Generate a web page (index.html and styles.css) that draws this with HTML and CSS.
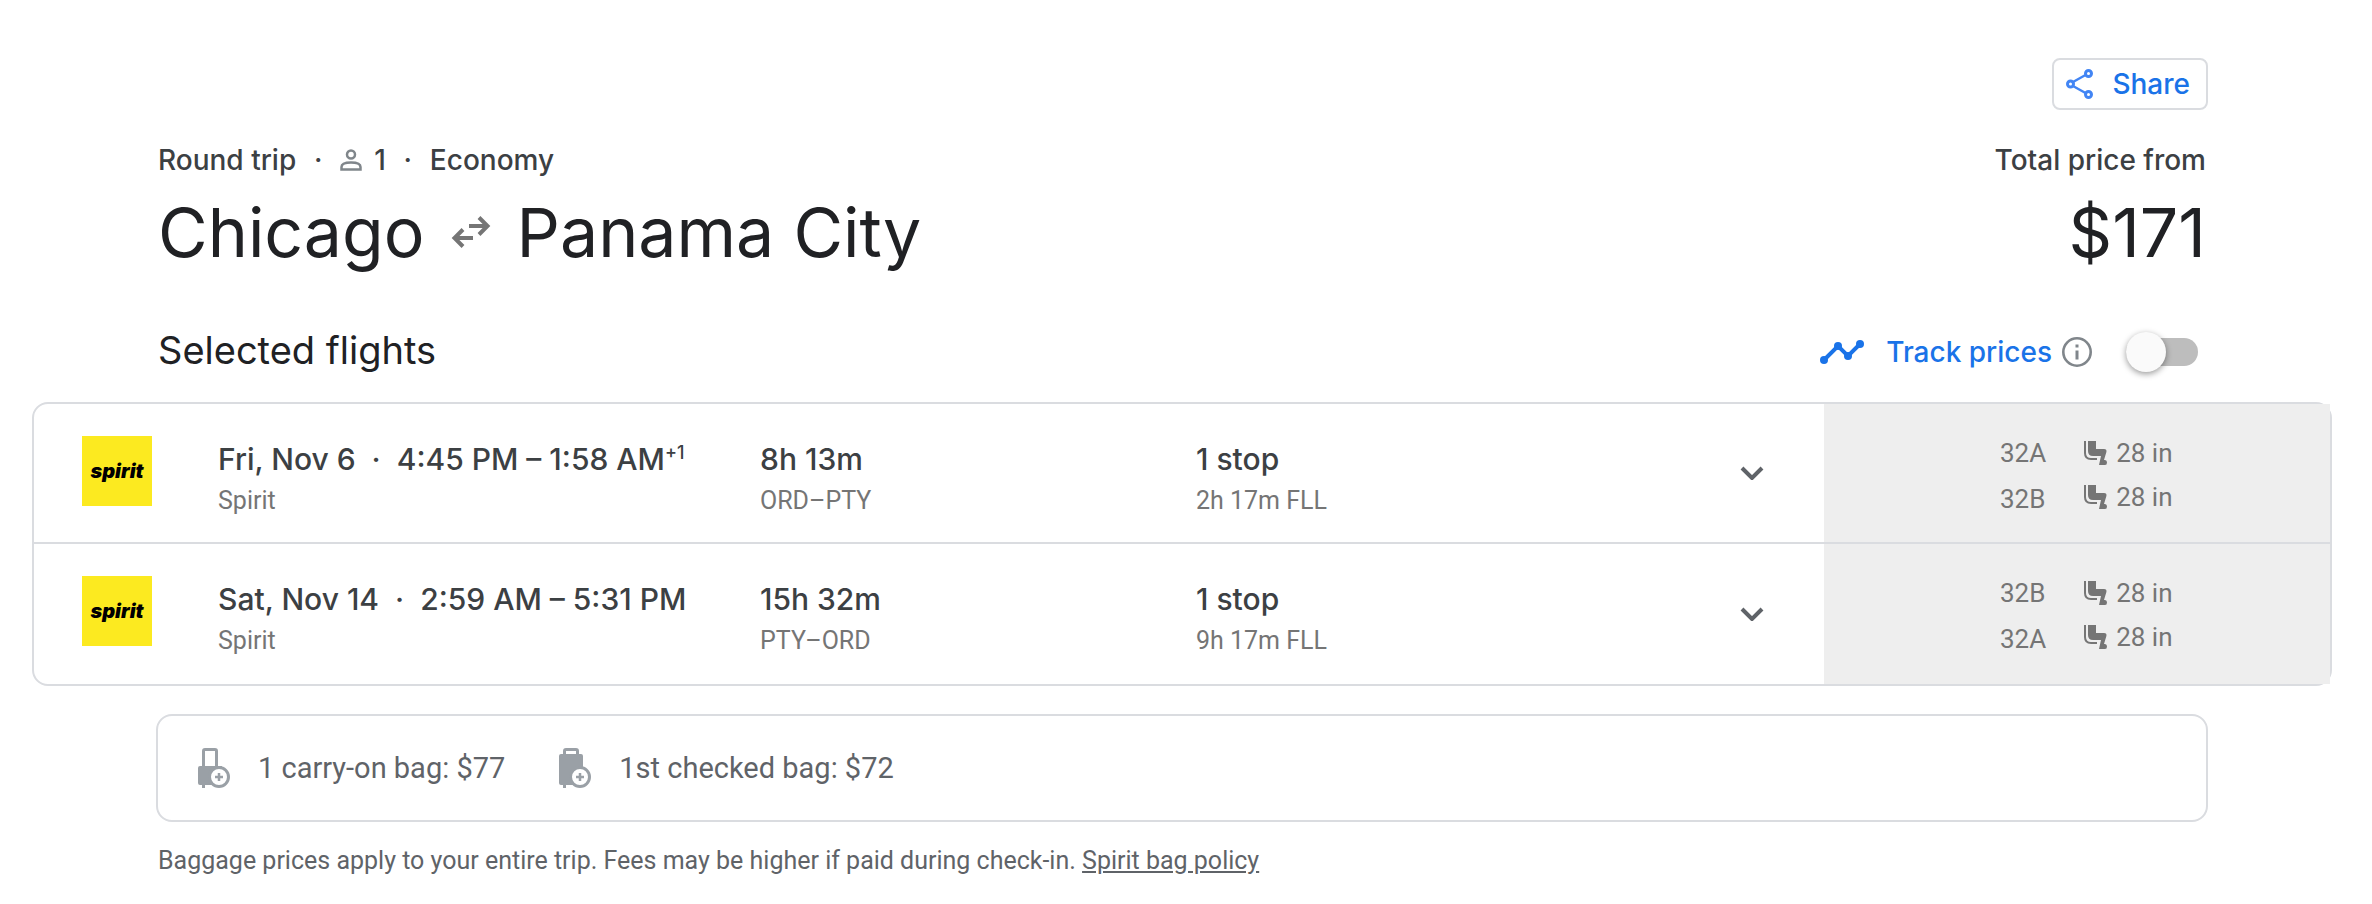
FILE: index.html
```html
<!DOCTYPE html>
<html lang="en">
<head>
    <meta charset="UTF-8">
    <meta name="viewport" content="width=device-width, initial-scale=1.0">
    <title>Chicago to Panama City</title>
    <link rel="stylesheet" href="styles.css">
</head>
<body>
    <!-- Shared icons -->
    <svg class="sprite" aria-hidden="true">
        <symbol id="chevron" viewBox="0 0 24 14">
            <path d="M2 2l10 10L22 2" fill="none" stroke="currentColor" stroke-width="4"/>
        </symbol>
        <symbol id="seat" viewBox="0 0 24 24">
            <path d="M1 0v12q0 6 6 6H13" fill="none" stroke="currentColor" stroke-width="2"/>
            <path d="M4 0h8v8h8q3 0 2.400 3l-2.400 8h1q2 0 2 2.500t-2 2.500h-6l2-9H9q-5 0-5-5z" fill="currentColor"/>
        </symbol>
    </svg>

    <main>
        <header class="inset">
            <div class="toolbar">
                <button type="button" class="share">
                    <svg width="28" height="30" viewBox="0 0 28 30" aria-hidden="true">
                        <g fill="none" stroke="#4285f4" stroke-width="3">
                            <path d="M7 13l12.500-7M7 17l12.500 7" stroke-width="2.500"/>
                            <circle cx="4.500" cy="15" r="3"/>
                            <circle cx="22.500" cy="4.500" r="3"/>
                            <circle cx="22.500" cy="25.500" r="3"/>
                        </g>
                    </svg>
                    Share
                </button>
            </div>
            <div class="summary">
                <div>
                    <p class="details">
                        <span>Round trip</span>
                        <span class="dot">·</span>
                        <span class="travelers">
                            <svg width="22" height="22" viewBox="0 0 22 22" aria-label="Passengers">
                                <g fill="none" stroke="#80868b" stroke-width="2.500">
                                    <circle cx="11" cy="5.500" r="4"/>
                                    <path d="M1.500 20.500V18q0-4.500 9.500-4.500T20.500 18v2.500z"/>
                                </g>
                            </svg>
                            1
                        </span>
                        <span class="dot">·</span>
                        <span>Economy</span>
                    </p>
                    <h1>
                        Chicago
                        <svg width="40" height="32" viewBox="0 0 40 32" aria-label="to">
                            <g fill="none" stroke="#757575" stroke-width="4">
                                <path d="M18 10h19M28 1.500l8.500 8.500-8.500 8.500"/>
                                <path d="M22 22H3M12 13.500L3.500 22l8.500 8.500"/>
                            </g>
                        </svg>
                        Panama City
                    </h1>
                </div>
                <div class="total">
                    <p class="details">Total price from</p>
                    <p class="price">$171</p>
                </div>
            </div>
            <div class="section-head">
                <h2>Selected flights</h2>
                <div class="track">
                    <svg width="44" height="24" viewBox="0 0 44 24" aria-hidden="true">
                        <path d="M4 20L18 6l10 10L40 4" fill="none" stroke="#1a73e8" stroke-width="4"/>
                        <g fill="#1a73e8">
                            <circle cx="4" cy="20" r="4"/>
                            <circle cx="18" cy="6" r="4"/>
                            <circle cx="28" cy="16" r="4"/>
                            <circle cx="40" cy="4" r="4"/>
                        </g>
                    </svg>
                    <label for="track-prices">Track prices</label>
                    <button type="button" class="info" aria-label="About price tracking">
                        <svg width="30" height="30" viewBox="0 0 30 30" aria-hidden="true">
                            <circle cx="15" cy="15" r="13.700" fill="none" stroke="#80868b" stroke-width="2.600"/>
                            <path d="M13.500 7.500h3v3h-3zM13.500 13.500h3v9h-3z" fill="#80868b"/>
                        </svg>
                    </button>
                    <input type="checkbox" id="track-prices" class="switch">
                </div>
            </div>
        </header>

        <!-- Flights -->
        <section class="flights">
            <article class="flight">
                <div class="logo">spirit</div>
                <div class="cell">
                    <p class="main-line">Fri, Nov 6 <span class="sep">·</span> 4:45 PM – 1:58 AM<sup>+1</sup></p>
                    <p class="sub-line">Spirit</p>
                </div>
                <div class="cell">
                    <p class="main-line">8h 13m</p>
                    <p class="sub-line">ORD–PTY</p>
                </div>
                <div class="cell">
                    <p class="main-line">1 stop</p>
                    <p class="sub-line">2h 17m FLL</p>
                </div>
                <button type="button" class="expand" aria-label="Flight details">
                    <svg width="24" height="14"><use href="#chevron"/></svg>
                </button>
                <div class="seats">
                    <ul class="seat-numbers">
                        <li>32A</li>
                        <li>32B</li>
                    </ul>
                    <ul class="legroom">
                        <li><svg width="24" height="24"><use href="#seat"/></svg>28 in</li>
                        <li><svg width="24" height="24"><use href="#seat"/></svg>28 in</li>
                    </ul>
                </div>
            </article>
            <article class="flight">
                <div class="logo">spirit</div>
                <div class="cell">
                    <p class="main-line">Sat, Nov 14 <span class="sep">·</span> 2:59 AM – 5:31 PM</p>
                    <p class="sub-line">Spirit</p>
                </div>
                <div class="cell">
                    <p class="main-line">15h 32m</p>
                    <p class="sub-line">PTY–ORD</p>
                </div>
                <div class="cell">
                    <p class="main-line">1 stop</p>
                    <p class="sub-line">9h 17m FLL</p>
                </div>
                <button type="button" class="expand" aria-label="Flight details">
                    <svg width="24" height="14"><use href="#chevron"/></svg>
                </button>
                <div class="seats">
                    <ul class="seat-numbers">
                        <li>32B</li>
                        <li>32A</li>
                    </ul>
                    <ul class="legroom">
                        <li><svg width="24" height="24"><use href="#seat"/></svg>28 in</li>
                        <li><svg width="24" height="24"><use href="#seat"/></svg>28 in</li>
                    </ul>
                </div>
            </article>
        </section>

        <!-- Baggage -->
        <section class="inset">
            <div class="bags">
                <div class="bag">
                    <svg width="34" height="40" viewBox="0 0 34 40" aria-hidden="true">
                        <path d="M5.500 19V3Q5.500 1.500 7 1.500h10Q18.500 1.500 18.500 3V19" fill="none" stroke="#9aa0a6" stroke-width="3"/>
                        <path d="M2 18h22v19H7v3H4v-3H2q-2 0-2-2V20q0-2 2-2z" fill="#9aa0a6"/>
                        <circle cx="21" cy="29" r="9.500" fill="#fff" stroke="#9aa0a6" stroke-width="3"/>
                        <path d="M21 25v8M17 29h8" stroke="#9aa0a6" stroke-width="2.500"/>
                    </svg>
                    1 carry-on bag: $77
                </div>
                <div class="bag">
                    <svg width="34" height="40" viewBox="0 0 34 40" aria-hidden="true">
                        <path d="M5.500 8V3Q5.500 1.500 7 1.500h10Q18.500 1.500 18.500 3V8" fill="none" stroke="#9aa0a6" stroke-width="3"/>
                        <path d="M2 6h20q2 0 2 2v29H7v3H4v-3H2q-2 0-2-2V8q0-2 2-2z" fill="#9aa0a6"/>
                        <circle cx="21" cy="29" r="9.500" fill="#fff" stroke="#9aa0a6" stroke-width="3"/>
                        <path d="M21 25v8M17 29h8" stroke="#9aa0a6" stroke-width="2.500"/>
                    </svg>
                    1st checked bag: $72
                </div>
            </div>
            <p class="note">Baggage prices apply to your entire trip. Fees may be higher if paid during check-in. <a href="#">Spirit bag policy</a></p>
        </section>
    </main>
</body>
</html>
```

FILE: styles.css
```css
/* General */
* {
    box-sizing: border-box;
}
body {
    margin: 0;
    background: #fff;
    color: #3c4043;
    font-family: Roboto, "Liberation Sans", sans-serif;
}
h1, h2, p, ul {
    margin: 0;
    padding: 0;
    font-weight: 400;
}
ul {
    list-style: none;
}
svg {
    display: block;
    flex: none;
}
button {
    padding: 0;
    border: 0;
    background: none;
    font: inherit;
    cursor: pointer;
}
.sprite {
    position: absolute;
    width: 0;
    height: 0;
}
main {
    padding: 58px 40px 24px 32px;
}
.inset {
    padding: 0 124px 0 126px;
}

/* Header */
.toolbar {
    display: flex;
    justify-content: flex-end;
}
.share {
    display: flex;
    align-items: center;
    gap: 18px;
    height: 52px;
    padding: 0 16px 0 12px;
    border: 2px solid #dadce0;
    border-radius: 8px;
    color: #1a73e8;
    font-family: Inter, sans-serif;
    font-size: 28px;
    font-weight: 500;
}
.summary {
    display: flex;
    justify-content: space-between;
    margin-top: 30px;
    font-family: Inter, sans-serif;
}
.details {
    display: flex;
    align-items: center;
    font-size: 28px;
    font-weight: 500;
    line-height: 40px;
}
.dot {
    width: 44px;
    text-align: center;
}
.travelers {
    display: flex;
    align-items: center;
    gap: 12px;
}
h1, .price {
    color: #202124;
    font-size: 68px;
    line-height: 88px;
    margin-top: 8px;
}
h1 {
    display: flex;
    align-items: center;
    gap: 26px;
}
.total {
    padding-right: 2px;
    text-align: right;
}
.section-head {
    display: flex;
    align-items: center;
    justify-content: space-between;
    height: 56px;
    margin-top: 48px;
    font-family: Inter, sans-serif;
}
h2 {
    padding-bottom: 4px;
    color: #202124;
    font-size: 38px;
    line-height: 48px;
}
.track {
    display: flex;
    align-items: center;
    padding-right: 10px;
    color: #1a73e8;
    font-size: 28px;
    font-weight: 500;
}
.track label {
    margin-left: 22px;
}
.info {
    margin-left: 10px;
}
.switch {
    appearance: none;
    display: flex;
    align-items: center;
    width: 72px;
    height: 28px;
    margin: 0 0 0 34px;
    border-radius: 14px;
    background: #bdbdbd;
}
.switch::before {
    content: "";
    width: 40px;
    height: 40px;
    border-radius: 50%;
    background: #fafafa;
    box-shadow: 0 2px 6px rgba(0, 0, 0, 0.4);
}
.switch:checked::before {
    margin-left: 32px;
}

/* Flights */
.flights {
    margin-top: 22px;
    border: 2px solid #dadce0;
    border-radius: 16px;
}
.flight {
    display: grid;
    grid-template-columns: 184px 542fr 436fr 484fr 144px 506fr;
    min-height: 140px;
}
.flight:first-child {
    border-bottom: 2px solid #dadce0;
}
.logo {
    display: flex;
    align-items: center;
    justify-content: center;
    width: 70px;
    height: 70px;
    margin: 32px 0 0 48px;
    background: #fcea20;
    color: #000;
    font-family: Inter, sans-serif;
    font-size: 20px;
    font-style: italic;
    font-weight: 900;
}
.cell {
    padding-top: 35px;
}
.main-line {
    font-family: Inter, sans-serif;
    font-size: 30px;
    font-weight: 500;
    line-height: 40px;
}
.main-line sup {
    font-size: 18px;
    line-height: 0;
}
.sep {
    margin: 0 8px;
}
.sub-line {
    margin-top: 6px;
    color: #757575;
    font-size: 25px;
    line-height: 32px;
}
.expand {
    justify-self: center;
    color: #5f6368;
}
.seats {
    display: flex;
    gap: 38px;
    padding: 26px 0 0 176px;
    background: #eee;
    color: #757575;
    font-size: 26px;
}
.seat-numbers {
    line-height: 46px;
}
.legroom {
    padding-top: 1px;
    line-height: 44px;
}
.legroom li {
    display: flex;
    align-items: center;
    gap: 8px;
}

/* Baggage */
.bags {
    display: flex;
    align-items: center;
    gap: 54px;
    min-height: 108px;
    margin: 28px 0 0 -2px;
    padding: 0 40px;
    border: 2px solid #dadce0;
    border-radius: 16px;
    color: #5f6368;
    font-size: 29px;
}
.bag {
    display: flex;
    align-items: center;
    gap: 26px;
}
.note {
    margin-top: 23px;
    color: #5f6368;
    font-size: 25px;
    line-height: 32px;
}
.note a {
    color: inherit;
}
```
